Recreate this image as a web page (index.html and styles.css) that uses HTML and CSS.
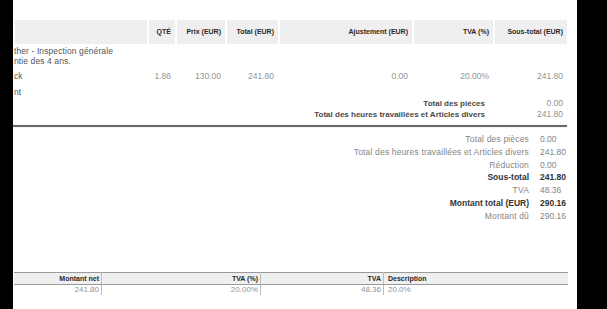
FILE: index.html
```html
<!DOCTYPE html>
<html lang="fr">
<head>
<meta charset="utf-8">
<title>Facture</title>
<link rel="stylesheet" href="styles.css">
</head>
<body>
<div class="sheet">
  <div class="items">
    <div class="grid thead">
      <div class="th"></div>
      <div class="th">QTÉ</div>
      <div class="th">Prix (EUR)</div>
      <div class="th">Total (EUR)</div>
      <div class="th">Ajustement (EUR)</div>
      <div class="th">TVA (%)</div>
      <div class="th">Sous-total (EUR)</div>
    </div>
    <div class="title">
      <div class="line">ther - Inspection générale</div>
      <div class="line">ntie des 4 ans.</div>
    </div>
    <div class="grid row">
      <div class="cell desc">ck</div>
      <div class="cell">1.86</div>
      <div class="cell">130.00</div>
      <div class="cell">241.80</div>
      <div class="cell">0.00</div>
      <div class="cell">20.00%</div>
      <div class="cell">241.80</div>
    </div>
    <div class="note">nt</div>
    <div class="tot first"><span class="lab">Total des pièces</span><span class="val">0.00</span></div>
    <div class="tot"><span class="lab">Total des heures travaillées et Articles divers</span><span class="val">241.80</span></div>
  </div>
  <div class="rule"></div>
  <div class="summary">
    <span class="slab">Total des pièces</span><span class="sval">0.00</span>
    <span class="slab">Total des heures travaillées et Articles divers</span><span class="sval">241.80</span>
    <span class="slab">Réduction</span><span class="sval">0.00</span>
    <span class="slab strong">Sous-total</span><span class="sval strong">241.80</span>
    <span class="slab">TVA</span><span class="sval">48.36</span>
    <span class="slab strong">Montant total (EUR)</span><span class="sval strong">290.16</span>
    <span class="slab">Montant dû</span><span class="sval">290.16</span>
  </div>
  <table class="vat">
    <thead>
      <tr><th class="c1">Montant net</th><th class="c2">TVA (%)</th><th class="c3">TVA</th><th class="c4">Description</th></tr>
    </thead>
    <tbody>
      <tr><td class="c1">241.80</td><td class="c2">20.00%</td><td class="c3">48.36</td><td class="c4">20.0%</td></tr>
    </tbody>
  </table>
</div>
</body>
</html>
```
FILE: styles.css
```css
html, body {
  margin: 0;
  padding: 0;
  background: #000;
}
body {
  width: 607px;
  height: 309px;
  overflow: hidden;
  font-family: "Liberation Sans", Arial, sans-serif;
}
.sheet {
  margin-left: 13px;
  width: 564px;
  height: 309px;
  background: #fff;
  padding-top: 20px;
  box-sizing: border-box;
  overflow: hidden;
}
.items {
  margin-left: 2px;
  width: 552px;
}
.grid {
  display: grid;
  grid-template-columns: 132px 28px 50px 53px 134px 81px 74px;
}
.thead {
  height: 24px;
}
.th {
  background: #efefef;
  border-left: 2px solid #fff;
  box-sizing: border-box;
  font-size: 7px;
  font-weight: bold;
  color: #2a2a2a;
  text-align: right;
  padding-right: 4px;
  line-height: 24px;
}
.th:first-child {
  border-left: 0;
}
.title {
  margin-top: 2px;
  margin-left: -1px;
  font-size: 8.5px;
  line-height: 10px;
  color: #555;
  letter-spacing: 0.1px;
}
.row {
  margin-top: 5px;
  font-size: 8.5px;
  line-height: 10px;
  color: #939393;
}
.cell {
  text-align: right;
  padding-right: 4px;
}
.cell.desc {
  text-align: left;
  color: #555;
  margin-left: -1px;
}
.note {
  margin-top: 6px;
  margin-left: -1px;
  font-size: 8.5px;
  line-height: 10px;
  color: #555;
}
.tot {
  display: grid;
  grid-template-columns: 1fr 74px;
  font-size: 8px;
  line-height: 11px;
}
.tot.first {
  margin-top: 1px;
}
.lab {
  text-align: right;
  padding-right: 8px;
  font-weight: bold;
  color: #4a4a4a;
}
.val {
  text-align: right;
  padding-right: 4px;
  color: #939393;
  font-size: 8.5px;
}
.rule {
  margin-top: 5px;
  width: 554px;
  height: 2px;
  background: #6a6a6a;
  box-shadow: 0 0 1px #999;
}
.summary {
  margin-top: 6px;
  width: 554px;
  display: grid;
  grid-template-columns: 1fr 27px;
  column-gap: 11px;
  font-size: 8.5px;
  line-height: 12.8px;
  color: #858585;
}
.slab {
  text-align: right;
  letter-spacing: 0.17px;
}
.sval {
  text-align: left;
}
.strong {
  font-weight: bold;
  color: #333;
  letter-spacing: 0;
}
.vat {
  margin-top: 49px;
  margin-left: 1px;
  width: 554px;
  border-collapse: collapse;
  table-layout: fixed;
  font-size: 8px;
}
.vat th {
  background: #efefef;
  border-top: 1px solid #9a9a9a;
  border-bottom: 1px solid #9a9a9a;
  font-size: 7px;
  font-weight: bold;
  color: #2a2a2a;
  height: 11px;
  line-height: 11px;
  padding: 0 2px;
}
.vat td {
  color: #939393;
  line-height: 10px;
  padding: 0 2px;
}
.vat .c1 { width: 83px; text-align: right; border-right: 1px solid #bdbdbd; }
.vat .c2 { width: 154px; text-align: right; border-right: 1px solid #bdbdbd; }
.vat .c3 { width: 118px; text-align: right; border-right: 1px solid #bdbdbd; }
.vat .c4 { text-align: left; padding-left: 4px; }
```
